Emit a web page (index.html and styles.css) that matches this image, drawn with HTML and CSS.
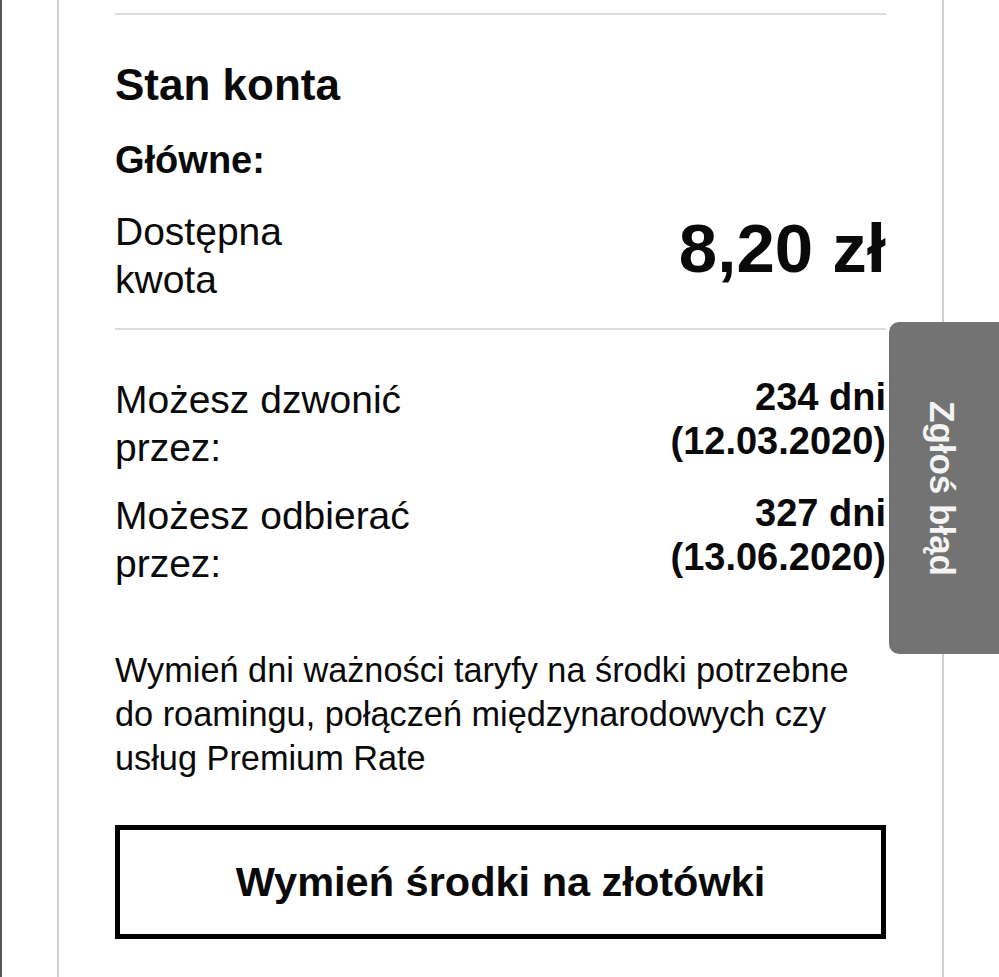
FILE: index.html
```html
<!DOCTYPE html>
<html lang="pl">
<head>
<meta charset="utf-8">
<title>Stan konta</title>
<link rel="stylesheet" href="styles.css">
</head>
<body>
<div class="page">
  <main class="card">
    <div class="sep"></div>
    <h2 class="title">Stan konta</h2>
    <h3 class="subtitle">Główne:</h3>
    <div class="balance">
      <div class="balance-label">Dostępna kwota</div>
      <div class="balance-amount">8,20 zł</div>
    </div>
    <div class="rows">
      <div class="row">
        <div class="row-label">Możesz dzwonić przez:</div>
        <div class="row-value">234 dni (12.03.2020)</div>
      </div>
      <div class="row">
        <div class="row-label">Możesz odbierać przez:</div>
        <div class="row-value">327 dni (13.06.2020)</div>
      </div>
    </div>
    <p class="info">Wymień dni ważności taryfy na środki potrzebne<br>do roamingu, połączeń międzynarodowych czy<br>usług Premium Rate</p>
    <button class="exchange" type="button">Wymień środki na złotówki</button>
  </main>
</div>
<div class="report-tab"><span class="report-text">Zgłoś błąd</span></div>
</body>
</html>
```

FILE: styles.css
```css
html, body {
  margin: 0;
  padding: 0;
  background: #ffffff;
}

body {
  font-family: "Liberation Sans", Arial, Helvetica, sans-serif;
  color: #0a0a0a;
  overflow: hidden;
  height: 977px;
}

.page {
  border-left: 2px solid #555555;
  height: 977px;
  box-sizing: border-box;
}

.card {
  margin-left: 55px;
  width: 887px;
  box-sizing: border-box;
  height: 977px;
  border-left: 2px solid #cfcfcf;
  border-right: 2px solid #cfcfcf;
  padding: 0 56px;
  display: flex;
  flex-direction: column;
}

.sep {
  height: 2px;
  background: #dddddd;
  margin-top: 13px;
}

.title {
  margin: 45px 0 0;
  font-size: 44px;
  line-height: 50px;
  font-weight: 700;
}

.subtitle {
  margin: 26px 0 0;
  font-size: 38px;
  line-height: 48px;
  font-weight: 700;
}

.balance {
  margin-top: 24px;
  display: flex;
  justify-content: space-between;
  align-items: flex-start;
  padding-bottom: 24px;
  border-bottom: 2px solid #dddddd;
}

.balance-label {
  width: 200px;
  font-size: 39px;
  line-height: 48px;
}

.balance-amount {
  margin-top: 1px;
  font-size: 69px;
  line-height: 79px;
  font-weight: 700;
  white-space: nowrap;
}

.rows {
  margin-top: 46px;
  display: flex;
  flex-direction: column;
  gap: 20px;
}

.row {
  display: flex;
  justify-content: space-between;
  align-items: flex-start;
}

.row-label {
  width: 310px;
  font-size: 39px;
  line-height: 48px;
}

.row-value {
  width: 230px;
  margin-top: -1px;
  text-align: right;
  font-size: 38px;
  line-height: 44px;
  font-weight: 700;
}

.info {
  margin: 60px 0 0;
  font-size: 34.3px;
  line-height: 44px;
}

.exchange {
  margin-top: 45px;
  height: 114px;
  border: 5px solid #000000;
  background: #ffffff;
  color: #0a0a0a;
  font-family: "Liberation Sans", Arial, Helvetica, sans-serif;
  font-size: 41.5px;
  font-weight: 700;
  padding: 0;
  cursor: pointer;
}

.report-tab {
  position: absolute;
  left: 889px;
  top: 322px;
  width: 130px;
  height: 332px;
  background: #737373;
  border-radius: 10px 0 0 10px;
  display: flex;
  align-items: center;
  justify-content: flex-start;
}

.report-text {
  width: 106px;
  writing-mode: vertical-rl;
  display: flex;
  align-items: center;
  justify-content: center;
  color: #f4f4f4;
  font-size: 35px;
  font-weight: 700;
  line-height: 106px;
}
```
